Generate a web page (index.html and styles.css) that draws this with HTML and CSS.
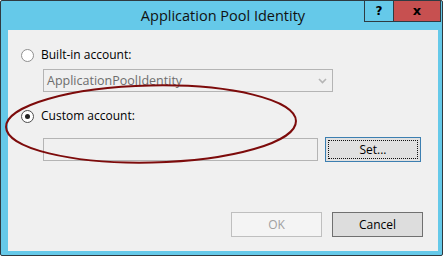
FILE: index.html
```html
<!DOCTYPE html>
<html lang="en">
<head>
  <meta charset="UTF-8">
  <title>Application Pool Identity</title>
  <link rel="stylesheet" href="styles.css">
</head>
<body>
  <div class="dlg">
    <div class="dlg-titlebar">
      <div class="dlg-title">Application Pool Identity</div>
      <div class="dlg-ctrls">
        <div class="ctrl-btn ctrl-help">?</div>
        <div class="ctrl-btn ctrl-close">x</div>
      </div>
    </div>
    <div class="dlg-body">
      <div class="opt-row">
        <span class="radio"></span>
        <span class="opt-label">Built-in account:</span>
      </div>
      <div class="combo">
        <span class="combo-text">ApplicationPoolIdentity</span>
        <svg class="combo-arrow" width="9" height="6" viewBox="0 0 9 6">
          <path d="M1 1 L4.5 4.5 L8 1" fill="none" stroke="#b5b5b5" stroke-width="1.6"/>
        </svg>
      </div>
      <div class="opt-row opt-row-2">
        <span class="radio checked"></span>
        <span class="opt-label">Custom account:</span>
      </div>
      <div class="acct-row">
        <div class="textbox"></div>
        <button class="btn btn-focus" type="button"><span>Set...</span></button>
      </div>
      <div class="dlg-footer">
        <button class="btn btn-disabled" type="button">OK</button>
        <button class="btn btn-default" type="button">Cancel</button>
      </div>
    </div>
  </div>

  <!-- annotation drawn over the dialog -->
  <svg class="markup" width="446" height="258" viewBox="0 0 446 258">
    <ellipse cx="151" cy="124" rx="145" ry="38.5" transform="rotate(-1.2 151 124)"
             fill="none" stroke="#7d0b0b" stroke-width="2"/>
  </svg>
</body>
</html>
```

FILE: styles.css
```css
* {
  box-sizing: border-box;
}
body {
  margin: 0;
  width: 446px;
  height: 258px;
  background: #ffffff;
  font-family: 'Open Sans', 'Noto Sans', sans-serif;
  font-size: 12px;
  color: #000000;
  position: relative;
  overflow: hidden;
}

.dlg {
  width: 443px;
  height: 256px;
  background: #65c9e9;
  border: 1px solid #2f3a40;
  border-radius: 2px;
  display: flex;
  flex-direction: column;
  padding: 0 4px 4px 7px;
}

/* 타이틀바 */
.dlg-titlebar {
  height: 29px;
  position: relative;
  display: flex;
  justify-content: center;
  align-items: center;
  flex-shrink: 0;
}
.dlg-title {
  font-size: 14.5px;
  color: #111;
  margin-top: -1px;
}
.dlg-ctrls {
  position: absolute;
  top: -1px;
  right: -3px;
  display: flex;
}
.ctrl-btn {
  height: 22px;
  border: 1px solid #2e3b42;
  display: flex;
  align-items: center;
  justify-content: center;
  font-family: 'DejaVu Sans', sans-serif;
  font-weight: bold;
  font-size: 12px;
}
.ctrl-help {
  width: 29px;
  border-right: none;
}
.ctrl-close {
  width: 48px;
  background: #c75050;
  font-size: 13px;
  padding-bottom: 2px;
}

/* 본문 */
.dlg-body {
  flex: 1;
  background: #f0f0f0;
  padding: 17px 15px 14px 13px;
  display: flex;
  flex-direction: column;
}
.opt-row {
  display: flex;
  align-items: center;
  gap: 7px;
  height: 16px;
}
.opt-row-2 {
  margin-top: 16px;
}
.radio {
  width: 13px;
  height: 13px;
  border: 1px solid #8f8f8f;
  border-radius: 50%;
  background: #ffffff;
  display: flex;
  align-items: center;
  justify-content: center;
}
.radio.checked {
  border-color: #4d4d4d;
}
.radio.checked::after {
  content: '';
  width: 5px;
  height: 5px;
  border-radius: 50%;
  background: #222;
}
.opt-label {
  margin-top: -1px;
}

.combo {
  margin: 6px 0 0 22px;
  width: 290px;
  height: 23px;
  border: 1px solid #b4b4b4;
  display: flex;
  align-items: center;
  justify-content: space-between;
  padding: 0 5px 0 3px;
}
.combo-text {
  color: #6d6d6d;
  font-size: 12.5px;
}
.combo-arrow {
  margin-top: 1px;
}

.acct-row {
  margin: 13px 0 0 22px;
  display: flex;
  align-items: center;
  gap: 7px;
}
.textbox {
  width: 275px;
  height: 23px;
  border: 1px solid #b4b4b4;
}

.btn {
  height: 25px;
  font-family: inherit;
  font-size: 12px;
  color: #000;
  background: #e1e1e1;
  border: 1px solid #adadad;
  padding: 0;
  margin: 0;
  cursor: default;
}
.btn-focus {
  width: 96px;
  border-color: #3c7fb1;
  padding: 2px;
  display: flex;
}
.btn-focus span {
  flex: 1;
  border: 1px dotted #111;
  display: flex;
  align-items: center;
  justify-content: center;
  padding-bottom: 1px;
}

.dlg-footer {
  margin-top: auto;
  display: flex;
  justify-content: flex-end;
  gap: 10px;
}
.dlg-footer .btn {
  width: 91px;
}
.btn-disabled {
  background: #f4f4f4;
  border-color: #bfbfbf;
  color: #a0a0a0;
}
.btn-default {
  background: #dddddd;
  border-color: #707070;
}

/* 빨간 표시 */
.markup {
  position: absolute;
  left: 0;
  top: 0;
  pointer-events: none;
}
```
